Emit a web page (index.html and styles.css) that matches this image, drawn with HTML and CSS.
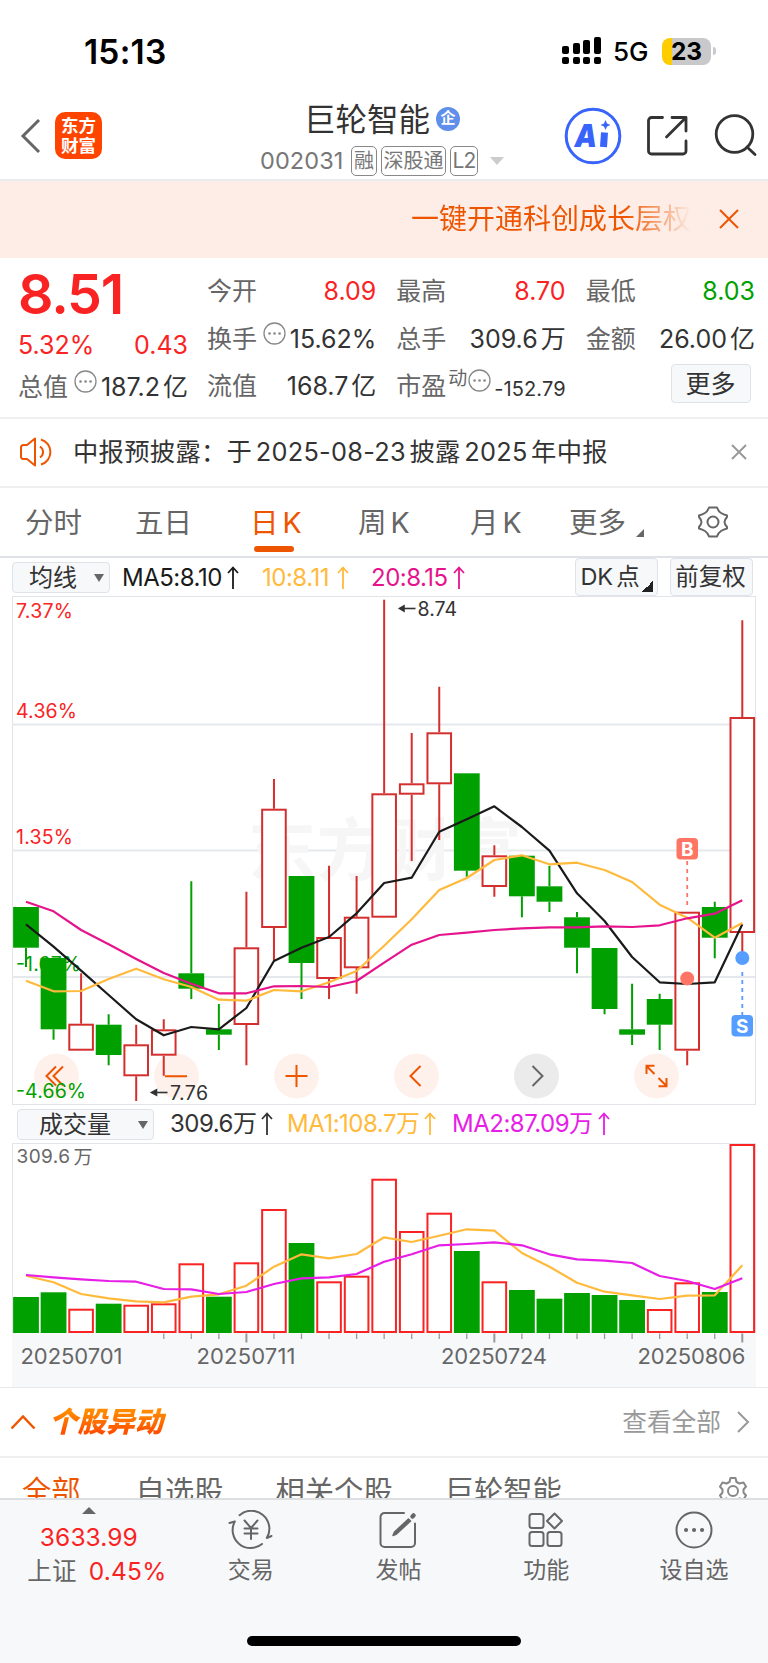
FILE: index.html
```
<!DOCTYPE html>
<html lang="zh-CN">
<head>
    <meta charset="utf-8">
    <title>巨轮智能 002031</title>
    <link rel="stylesheet" href="styles.css">
</head>
<body>
    <div class="status-bar">
        <span class="status-time">15:13</span>
        <svg class="status-signal" width="40" height="28" viewBox="0 0 40 28">
            <rect x="0" y="9" width="7" height="8" rx="2"/>
            <rect x="11" y="6" width="7" height="11" rx="2"/>
            <rect x="21" y="3" width="7" height="14" rx="2"/>
            <rect x="32" y="0" width="7" height="17" rx="2"/>
            <rect x="0" y="20" width="7" height="7" rx="2"/>
            <rect x="11" y="20" width="7" height="7" rx="2"/>
            <rect x="21" y="20" width="7" height="7" rx="2"/>
            <rect x="32" y="20" width="7" height="7" rx="2"/>
        </svg>
        <span class="status-net">5G</span>
        <span class="battery">23</span>
        <span class="battery-tip"></span>
    </div>

    <div class="header">
        <svg class="header-back" width="22" height="36" viewBox="0 0 22 36"><path d="M19 2 L3 18 L19 34"/></svg>
        <div class="logo"><span>东方</span><span>财富</span></div>
        <div class="header-title">
            <div class="stock-name">巨轮智能<span class="name-badge">企</span></div>
            <div class="stock-code">
                <span class="code-num">002031</span>
                <span class="tag">融</span><span class="tag tag--wide">深股通</span><span class="tag tag--l2">L2</span>
                <span class="code-arrow"></span>
            </div>
        </div>
        <svg class="header-icons" width="196" height="60" viewBox="0 0 196 60">
            <circle cx="30" cy="30" r="26.8" fill="none" stroke="#3864fb" stroke-width="3"/>
            <text x="11.500" y="40.500" class="ai-text" textLength="22.500" lengthAdjust="spacingAndGlyphs">A</text>
            <path d="M41.500 26.500L40.500 41" stroke="#3864fb" stroke-width="7"/>
            <path d="M42.500 14L44 17.500L47.500 19L44 20.500L42.500 24L41 20.500L37.500 19L41 17.500Z" fill="#3864fb"/>
            <g fill="none" stroke="#333" stroke-width="2.800" stroke-linecap="round" stroke-linejoin="round">
                <path d="M99.500 11.500H88.500a3 3 0 0 0-3 3V45a3 3 0 0 0 3 3H120a3 3 0 0 0 3-3V35"/>
                <path d="M109 11.500H123V25M122.500 12L103.500 31"/>
                <circle cx="171.500" cy="28" r="18.300"/>
                <path d="M184 41L192 48.500"/>
            </g>
        </svg>
    </div>

    <div class="banner">
        <span class="banner-text">一键开通科创成长层权</span>
        <svg width="20" height="20" viewBox="0 0 20 20"><path d="M1 1L19 19M19 1L1 19"/></svg>
    </div>

    <div class="quote">
        <div class="quote-main">
            <div class="price">8.51</div>
            <div class="change"><span>5.32%</span><span>0.43</span></div>
            <div class="cell cell--total"><label>总值</label><svg class="dots"><use href="#dots"/></svg><b>187.2<i>亿</i></b></div>
        </div>
        <div class="quote-grid">
            <div class="cell"><label>今开</label><b class="up">8.09</b></div>
            <div class="cell"><label>最高</label><b class="up">8.70</b></div>
            <div class="cell"><label>最低</label><b class="down">8.03</b></div>
            <div class="cell"><label>换手</label><svg class="dots"><use href="#dots"/></svg><b>15.62%</b></div>
            <div class="cell"><label>总手</label><b>309.6<i>万</i></b></div>
            <div class="cell"><label>金额</label><b>26.00<i>亿</i></b></div>
            <div class="cell"><label>流值</label><b>168.7<i>亿</i></b></div>
            <div class="cell"><label>市盈</label><sup>动</sup><svg class="dots dots--pe"><use href="#dots"/></svg><b class="small">-152.79</b></div>
            <div class="cell cell--more"><button class="btn-more">更多</button></div>
        </div>
    </div>

    <div class="notice">
        <svg width="34" height="30" viewBox="0 0 34 30">
            <path d="M16 1.500L8 8H4.500A2.500 2.500 0 0 0 2 10.500V19.500A2.500 2.500 0 0 0 4.500 22H8L16 28.500ZM21 9.500A6.500 6.500 0 0 1 21 20.500M22 2.500A13 13 0 0 1 22 27.500"/>
        </svg>
        <span class="notice-text">中报预披露：于<em>2025-08-23</em>披露<em>2025</em>年中报</span>
        <svg class="notice-close" width="16" height="16" viewBox="0 0 16 16"><path d="M1 1L15 15M15 1L1 15"/></svg>
    </div>

    <div class="tabs">
        <span class="tab">分时</span>
        <span class="tab">五日</span>
        <span class="tab tab--active">日<em>K</em></span>
        <span class="tab">周<em>K</em></span>
        <span class="tab tab--month">月<em>K</em></span>
        <span class="tab tab--more">更多</span>
        <svg class="tabs-gear" width="34" height="34" viewBox="0 0 34 34">
            <path d="M13 2.500H21Q22.500 6.500 25 8T31 10.500V12Q28.500 15 28.500 17T31 22V23.500Q27.500 24.500 25 26T21 31.500H13Q11.500 27.500 9 26T3 23.500V22Q5.500 19 5.500 17T3 12V10.500Q6.500 9.500 9 8T13 2.500Z"/>
            <circle cx="17" cy="17" r="5.500"/>
        </svg>
    </div>

    <div class="indicators">
        <span class="select select--ma">均线</span>
        <span class="ind ind--ma5">MA5:8.10<svg class="rise"><use href="#rise"/></svg></span>
        <span class="ind ind--ma10">10:8.11<svg class="rise rise--wide"><use href="#rise"/></svg></span>
        <span class="ind ind--ma20">20:8.15<svg class="rise"><use href="#rise"/></svg></span>
        <span class="box-btn box-btn--dk"><em>DK</em>点</span>
        <span class="box-btn">前复权</span>
    </div>

    <svg class="chart" id="kline" width="768" height="509" viewBox="0 0 768 509">
        <rect x="12.500" y="0.500" width="743" height="508" fill="none" stroke="#e1e4e9"/>
        <path d="M12 128.500H755M12 254.500H755M12 381H755" stroke="#e5e9ee" stroke-width="1.800"/>
        <text x="248" y="279" class="watermark" textLength="274">东方财富</text>
        <g class="axis-label">
            <text x="16" y="22" textLength="57">7.37%</text>
            <text x="16" y="122" textLength="61">4.36%</text>
            <text x="16" y="248" textLength="57">1.35%</text>
            <text x="16" y="374.500" textLength="65" class="axis-label--down">-1.67%</text>
        </g>
        <g id="candles"></g>
        <g id="averages"></g>
        <g class="marker marker--buy">
            <rect x="676.500" y="242" width="21.500" height="21.500" rx="4"/>
            <text x="687.200" y="259.500">B</text>
            <path d="M687.200 265V309"/>
            <circle cx="687.200" cy="382.500" r="7"/>
        </g>
        <g class="marker marker--sell">
            <circle cx="742.300" cy="362" r="7"/>
            <path d="M742.300 376V419"/>
            <rect x="731.500" y="419" width="21.500" height="21.500" rx="4"/>
            <text x="742.200" y="436.800">S</text>
        </g>
        <g class="tool">
            <circle cx="56.500" cy="480" r="22.500"/>
            <circle cx="176.500" cy="480" r="22.500"/>
            <circle cx="296.500" cy="480" r="22.500"/>
            <circle cx="416.500" cy="480" r="22.500"/>
            <circle cx="536.500" cy="480" r="22.500" class="tool--off"/>
            <circle cx="656.500" cy="480" r="22.500"/>
            <path d="M56 470.500L46.500 480L56 489.500M63 470.500L53.500 480L63 489.500M165 480.300H187M285.500 480H307.500M296.500 469V491M420.500 470L410.500 480L420.500 490"/>
            <path d="M532.500 470L542.500 480L532.500 490" class="tool--off-arrow"/>
            <path d="M654.500 469.800H646.500V478M646.500 470L654.500 478M658.500 490.300H666.500V482M666.500 490L658.500 482"/>
        </g>
        <g class="axis-label">
            <text x="16" y="501.500" textLength="70" class="axis-label--down">-4.66%</text>
        </g>
        <g class="peak">
            <text x="417.500" y="20" textLength="39.500">8.74</text>
            <path d="M402 12.500H415.500"/>
            <path d="M399.500 12.500L404 9.800V15.200Z"/>
            <text x="170" y="503.500" textLength="38">7.76</text>
            <path d="M154 496.500H167.500"/>
            <path d="M151.500 496.500L156.500 493.800V499.200Z"/>
        </g>
    </svg>

    <div class="indicators indicators--vol">
        <span class="select select--vol">成交量</span>
        <span class="ind ind--vol">309.6万<svg class="rise"><use href="#rise"/></svg></span>
        <span class="ind ind--ma1">MA1:108.7万<svg class="rise"><use href="#rise"/></svg></span>
        <span class="ind ind--ma2">MA2:87.09万<svg class="rise"><use href="#rise"/></svg></span>
    </div>

    <svg class="chart" id="volume" width="768" height="244" viewBox="0 0 768 244">
        <rect x="12" y="190" width="744" height="54" fill="#f7f8fa"/>
        <path d="M12.500 190V0.500H755.500V190" fill="none" stroke="#e1e4e9"/>
        <text x="16.500" y="20" class="vol-max" textLength="53.500">309.6</text>
        <text x="73.500" y="20.500" class="vol-max">万</text>
        <g id="bars"></g>
        <g id="volAverages"></g>
        <g id="ticks"></g>
        <g class="date">
            <text x="20.500" y="221" textLength="102">20250701</text>
            <text x="196.500" y="221" textLength="99">20250711</text>
            <text x="441" y="221" textLength="106">20250724</text>
            <text x="637.500" y="221" textLength="108">20250806</text>
        </g>
    </svg>

    <div class="section-head">
        <svg width="26" height="16" viewBox="0 0 26 16"><path d="M1.500 14.500L13 2.500L24.500 14.500"/></svg>
        <span class="section-title">个股异动</span>
        <span class="section-all">查看全部</span>
        <svg class="section-go" width="14" height="24" viewBox="0 0 14 24"><path d="M2 2L12 12L2 22"/></svg>
    </div>

    <div class="sub-tabs">
        <span class="sub-tab sub-tab--active">全部</span>
        <span class="sub-tab">自选股</span>
        <span class="sub-tab">相关个股</span>
        <span class="sub-tab">巨轮智能</span>
        <svg width="30" height="30" viewBox="0 0 30 30">
            <path d="M11.500 6L12.500 2H17.500L18.500 6L21.500 7.500L25.500 6.500L28 10.500L25.500 13.500V16.500L28 19.500L25.500 23.500L21.500 22.500L18.500 24L17.500 28H12.500L11.500 24L8.500 22.500L4.500 23.500L2 19.500L4.500 16.500V13.500L2 10.500L4.500 6.500L8.500 7.500Z"/>
            <circle cx="15" cy="15" r="5"/>
        </svg>
    </div>

    <div class="bottom-nav">
        <div class="nav-index">
            <span class="nav-caret"></span>
            <span class="nav-points">3633.99</span>
            <span class="nav-market">上证<em>0.45%</em></span>
        </div>
        <div class="nav-item">
            <svg width="46" height="40" viewBox="0 0 46 40">
                <path d="M11.500 5.200A18 18 0 0 1 38.800 28L43.500 26M34 34A18 18 0 0 1 6.800 11.500L1.500 13"/>
                <path d="M16.500 10.500L23 18L29.500 10.500M23 18V29M16.500 18.500H29.500M16.500 23.500H29.500"/>
            </svg>
            <span>交易</span>
        </div>
        <div class="nav-item">
            <svg width="44" height="40" viewBox="0 0 44 40">
                <path d="M28 3H8.500A4 4 0 0 0 4.500 7V33A4 4 0 0 0 8.500 37H35A4 4 0 0 0 39 33V13.500"/>
                <path d="M36.500 6.500L37.500 5.500" stroke-width="4.500"/>
                <path d="M32.500 9L34.500 11L20.500 24L17 25.500L18.500 22Z" fill="#666" stroke-width="1.500"/>
            </svg>
            <span>发帖</span>
        </div>
        <div class="nav-item">
            <svg width="44" height="40" viewBox="0 0 44 40">
                <rect x="5.500" y="4" width="14" height="14" rx="2.500"/>
                <rect x="5.500" y="22" width="14" height="14" rx="2.500"/>
                <rect x="23.500" y="22" width="14" height="14" rx="2.500"/>
                <path d="M30.500 3.500L38 11L30.500 18.500L23 11Z"/>
            </svg>
            <span>功能</span>
        </div>
        <div class="nav-item">
            <svg width="44" height="40" viewBox="0 0 44 40">
                <circle cx="22" cy="20" r="17.500"/>
                <path d="M14 20h.1M22 20h.1M30 20h.1" stroke-width="4"/>
            </svg>
            <span>设自选</span>
        </div>
        <div class="home-bar"></div>
    </div>

    <svg class="defs" width="0" height="0">
        <symbol id="dots" viewBox="0 0 23 23">
            <circle cx="11.500" cy="11.500" r="10.500" fill="none" stroke="#888" stroke-width="1.300"/>
            <path d="M6.500 11.500h.1M11.500 11.500h.1M16.500 11.500h.1" stroke="#888" stroke-width="2.600" stroke-linecap="round"/>
        </symbol>
        <symbol id="rise" viewBox="0 0 12 24">
            <path d="M6 23V2M1 7L6 1.500L11 7" fill="none" stroke="currentColor" stroke-width="1.800"/>
        </symbol>
    </svg>

    <script>
        const STEP = 27.55;
        const FIRST = 26;

        // up, high, top, bottom, low
        const candles = [
            [0, 311, 311, 351.7, 371], [0, 362, 362, 433.3, 443.7], [1, 377.3, 427.7, 454.7, 454.7],
            [0, 418.3, 428.7, 459, 469.3], [1, 428.7, 448.3, 480.3, 505], [1, 423.3, 433.3, 459.7, 479.7],
            [0, 285.3, 377.3, 392.7, 403], [0, 408, 433.3, 438.7, 454], [1, 295.7, 351.3, 429, 469.3],
            [1, 183, 212.7, 332, 365.7], [0, 280, 280, 367, 403], [1, 269.7, 341, 383, 403],
            [1, 280, 320.7, 372.3, 397.7], [1, 3.7, 197.3, 321.7, 321.7], [1, 137, 187.3, 198.7, 265],
            [1, 90.7, 136.3, 188.3, 244], [0, 177.3, 177.3, 274.7, 280.7], [1, 249.3, 259.3, 291, 300.7],
            [0, 259.7, 259.7, 300.3, 321.3], [0, 269.7, 290.3, 305.7, 316], [0, 316, 321.3, 351.7, 377.3],
            [0, 352, 352, 413, 418.3], [0, 387.7, 433.3, 438.7, 449], [0, 397.7, 403, 428.7, 454],
            [1, 315.7, 315.7, 454.7, 469.3], [0, 305.7, 311, 341.7, 362.3], [1, 24.3, 121, 337, 367.3]
        ];
        const bars = [154, 149.3, 165.7, 160.7, 161.7, 160.3, 120.3, 153.7, 119.3, 66, 100, 138.3, 132.7, 35.7,
            88, 69.7, 108, 138.3, 147, 155.7, 150, 152, 157, 166, 139.3, 149, 1];
        const barUp = [0, 0, 1, 0, 1, 1, 1, 0, 1, 1, 0, 1, 1, 1, 1, 1, 0, 1, 0, 0, 0, 0, 0, 1, 1, 0, 1];

        const ma5 = [328.3, 350.7, 374.7, 399, 423.3, 439.3, 431, 433.3, 412, 365, 351.7, 341, 317.3, 287, 281.7,
            235.7, 223.3, 210.3, 231, 254.7, 297.3, 325, 361, 386.3, 388, 386.3, 328.3];
        const ma10 = [384.7, 395.3, 395, 383, 372.7, 383.3, 391, 403.7, 404.7, 394, 395.3, 386.3, 375, 349.7, 323.3,
            294, 282, 264, 259.3, 268.3, 266.7, 274, 286, 308.7, 321.7, 341.7, 327];
        const ma20 = [305.7, 315.3, 334, 348.3, 363, 377, 387.7, 397.3, 397.3, 390.3, 390, 391, 385, 366.7, 348.7,
            339, 336.7, 334, 332.3, 331.3, 331.3, 330.3, 331, 329.3, 322.3, 317.7, 304.3];
        const volMa1 = [132.7, 139.3, 151, 155.3, 158.3, 159.3, 153.7, 151.3, 142.7, 123.7, 111.3, 115.3, 111, 94.3,
            99, 92.7, 86.3, 87.7, 110, 123.7, 139.7, 148.7, 152.3, 156, 152.7, 152.3, 122.3];
        const volMa2 = [132, 134.3, 136.3, 138, 138.7, 146, 146.3, 151, 149, 141, 135.3, 134.3, 131, 118.7,
            111.3, 102.3, 101, 99.3, 102.3, 111.3, 116.3, 117.7, 120, 133, 138, 146, 135.3];

        function addShape(parentId, tag, attrs) {
            const el = document.createElementNS("http://www.w3.org/2000/svg", tag);
            for (const key in attrs) {
                el.setAttribute(key, attrs[key]);
            }
            document.getElementById(parentId).appendChild(el);
        }

        function addBody(parentId, x, top, bottom, up, className) {
            const inset = up ? 1 : 0;
            const half = up ? 11.8 : 12.9;
            addShape(parentId, "rect", {
                x: x - half, y: top + inset, width: half * 2, height: bottom - top - inset * 2, class: className
            });
        }

        function addLine(parentId, values, color) {
            const points = values.map((v, i) => (FIRST + i * STEP) + "," + v).join(" ");
            addShape(parentId, "polyline", { points: points, stroke: color });
        }

        candles.forEach(function(c, i) {
            const x = FIRST + i * STEP;
            const name = c[0] ? "candle candle--up" : "candle candle--down";
            addShape("candles", "path", { d: `M${x} ${c[1]}V${c[2]}M${x} ${c[3]}V${c[4]}`, class: name });
            addBody("candles", x, c[2], c[3], c[0], name);
        });

        bars.forEach(function(top, i) {
            addBody("bars", FIRST + i * STEP, top, 190, barUp[i], barUp[i] ? "bar--up" : "candle--down");
        });

        for (let i = 5; i < 27; i++) {
            const major = i % 9 === 8;
            addShape("ticks", "path", { d: `M${FIRST + i * STEP} 190.500v${major ? 9 : 5.5}`, "stroke-width": major ? 2 : 1.3 });
        }

        addLine("averages", ma5, "#1a1a1a");
        addLine("averages", ma10, "#ffba3c");
        addLine("averages", ma20, "#e6148c");
        addLine("volAverages", volMa1, "#ffba3c");
        addLine("volAverages", volMa2, "#e61ee6");
    </script>
</body>
</html>
```
FILE: styles.css
```
:root {
    --red: #fa2323;
    --green: #00a000;
    --orange: #ee5500;
    --line: #e6e8eb;
    --panel: #f7f8fa;
}

* {
    box-sizing: border-box;
}

body {
    background: #fff;
    color: #333;
    font-family: Inter, "Noto Sans CJK SC", sans-serif;
    height: 1663px;
    margin: 0;
    overflow: hidden;
    width: 768px;
}

svg {
    display: block;
    flex-shrink: 0;
}

em,
i,
b {
    font-style: normal;
    font-weight: 400;
}

.defs {
    position: absolute;
}

/* status bar */
.status-bar {
    align-items: center;
    color: #000;
    display: flex;
    height: 102px;
    padding-left: 84px;
}

.status-time {
    font-size: 33.5px;
    font-weight: 600;
    letter-spacing: 0.2px;
    line-height: 40px;
    margin-top: 2px;
    width: 478px;
}

.status-net {
    font-size: 26px;
    font-weight: 500;
    line-height: 32px;
    margin-left: 11px;
    margin-top: 2px;
    width: 49px;
}

.battery {
    background: linear-gradient(90deg, #ffcc00 10px, #c9c9cb 10px);
    border-radius: 8px;
    font-size: 24.5px;
    font-weight: 700;
    height: 27px;
    line-height: 27px;
    text-align: center;
    width: 49px;
}

.battery-tip {
    background: #c9c9cb;
    border-radius: 0 3px 3px 0;
    height: 8px;
    margin-left: 2px;
    width: 3px;
}

/* header */
.header {
    border-bottom: 2px solid #e9ecee;
    display: flex;
    height: 79px;
}

.header-back {
    fill: none;
    margin: 16px 13px 0 20px;
    stroke: #666;
    stroke-width: 3;
}

.logo {
    align-items: center;
    background: #ff4400;
    border-radius: 10px;
    color: #fff;
    display: flex;
    flex-direction: column;
    font-size: 17.5px;
    font-weight: 700;
    height: 47px;
    justify-content: center;
    line-height: 20px;
    margin-top: 10px;
    width: 47px;
}

.header-title {
    margin-left: 158px;
    width: 303px;
}

.stock-name {
    display: flex;
    font-size: 31.5px;
    height: 37px;
    line-height: 35px;
    padding-left: 44px;
}

.name-badge {
    background: #5f8fea;
    border-radius: 50%;
    color: #fff;
    font-size: 15px;
    font-weight: 700;
    height: 24px;
    line-height: 22px;
    margin: 5px 0 0 6px;
    text-align: center;
    width: 24px;
}

.stock-code {
    align-items: center;
    color: #777;
    display: flex;
    height: 44px;
}

.code-num {
    font-size: 23.5px;
    letter-spacing: 0.1px;
    line-height: 28px;
    width: 91px;
}

.tag {
    border: 1.5px solid #888;
    border-radius: 5px;
    font-size: 20px;
    height: 30px;
    line-height: 28px;
    text-align: center;
    width: 26px;
}

.tag--wide {
    margin: 0 4px;
    width: 65px;
}

.tag--l2 {
    font-size: 21px;
    letter-spacing: -0.8px;
    width: 28px;
}

.code-arrow {
    border: 7px solid transparent;
    border-bottom: none;
    border-top: 8px solid #ccc;
    margin-left: 12px;
}

.header-icons {
    margin-top: 4px;
}

.ai-text {
    fill: #3864fb;
    font-size: 32px;
    font-style: italic;
    font-weight: 900;
}

/* banner */
.banner {
    align-items: center;
    background: #fdede6;
    display: flex;
    height: 77px;
    justify-content: flex-end;
    padding-right: 29px;
}

.banner-text {
    background: linear-gradient(90deg, var(--orange) 215px, rgba(238, 85, 0, 0) 280px);
    -webkit-background-clip: text;
    background-clip: text;
    color: transparent;
    font-size: 28px;
    line-height: 40px;
    margin-right: 28px;
    margin-top: -1px;
}

.banner svg {
    fill: none;
    margin-top: -2px;
    stroke: var(--orange);
    stroke-width: 2;
}

/* quote */
.quote {
    border-bottom: 2px solid #eeeff1;
    display: flex;
    height: 161px;
    padding: 9px 13px 0 18px;
}

.quote-main {
    width: 170px;
}

.price {
    color: var(--red);
    font-size: 55.5px;
    font-weight: 600;
    height: 64px;
    letter-spacing: -1.2px;
    line-height: 54px;
}

.change {
    color: var(--red);
    display: flex;
    font-size: 25px;
    height: 32px;
    justify-content: space-between;
    line-height: 29px;
}

.quote-grid {
    column-gap: 20px;
    display: grid;
    flex: 1;
    grid-auto-rows: 47.5px;
    grid-template-columns: repeat(3, 1fr);
    margin-left: 19px;
}

.cell {
    color: #333;
    display: flex;
    font-size: 25px;
    height: 47.5px;
    line-height: 48px;
}

.cell label {
    color: #666;
}

.cell b {
    margin-left: auto;
    white-space: nowrap;
}

.cell i {
    margin-left: 3px;
}

.cell sup {
    color: #666;
    font-size: 19px;
    line-height: 33px;
    margin-left: 2px;
    vertical-align: baseline;
}

.cell .small {
    font-size: 20px;
    letter-spacing: 0.1px;
    padding-top: 3px;
}

.cell .up {
    color: var(--red);
}

.cell .down {
    color: var(--green);
}

.dots {
    height: 23px;
    margin: 7px 0 0 6px;
    width: 23px;
}

.dots--pe {
    margin-left: 1px;
}

.cell--more {
    justify-content: flex-end;
}

.btn-more {
    background: var(--panel);
    border: 1.5px solid #dfe2e8;
    border-radius: 4px;
    color: #333;
    font: inherit;
    height: 39px;
    line-height: 34px;
    margin: 2px 4px 0 0;
    padding: 0 1px 0 0;
    width: 80px;
}

/* notice */
.notice {
    align-items: center;
    border-bottom: 2px solid #eeeff1;
    display: flex;
    height: 69px;
    padding: 0 21px 1px 19px;
}

.notice svg {
    fill: none;
    stroke: var(--orange);
    stroke-linejoin: round;
    stroke-width: 2;
}

.notice-text {
    flex: 1;
    font-size: 25.3px;
    letter-spacing: 0.3px;
    line-height: 36px;
    margin-left: 20px;
}

.notice-text em {
    margin: 0 3.5px;
}

.notice .notice-close {
    stroke: #999;
}

/* period tabs */
.tabs {
    border-bottom: 2px solid #dfe2e6;
    color: #666;
    display: flex;
    font-size: 28.5px;
    height: 70px;
    line-height: 69px;
    padding-left: 25px;
}

.tab {
    width: 110px;
}

.tab em {
    margin-left: 4px;
}

.tab--active {
    color: var(--orange);
    margin-left: 5px;
    position: relative;
    width: 108px;
}

.tab--active::after {
    background: var(--orange);
    border-radius: 3px;
    bottom: 4px;
    content: "";
    height: 6px;
    left: 4px;
    position: absolute;
    width: 40px;
}

.tab--month {
    margin-left: 2px;
}

.tab--more {
    display: flex;
    margin-left: -11px;
    width: 127px;
}

.tab--more::after {
    border-bottom: 8px solid #666;
    border-left: 8px solid transparent;
    content: "";
    height: 0;
    margin: 41px 0 0 10px;
}

.tabs-gear {
    fill: none;
    margin-top: 17px;
    stroke: #666;
    stroke-linejoin: round;
    stroke-width: 2;
}

/* indicator rows */
.indicators {
    align-items: center;
    display: flex;
    height: 38px;
    padding-left: 12px;
}

.indicators--vol {
    padding-left: 17px;
}

.select {
    align-items: center;
    background: var(--panel);
    border: 1.5px solid #dfe2e8;
    border-radius: 4px;
    display: flex;
    font-size: 24px;
    height: 31px;
    justify-content: space-between;
    line-height: 28px;
    padding: 1px 5px 0 16px;
}

.select::after {
    border: 5px solid transparent;
    border-bottom: none;
    border-top: 8px solid #666;
    content: "";
}

.select--ma {
    width: 98px;
}

.select--vol {
    padding-left: 21px;
    width: 137px;
}

.ind {
    display: flex;
    font-size: 24px;
    letter-spacing: -0.5px;
    white-space: nowrap;
}

.rise {
    height: 24px;
    margin: 3px 0 0 5px;
    width: 12px;
}

.rise--wide {
    margin-left: 8px;
}

.ind--ma5 {
    color: #1a1a1a;
    margin-left: 12px;
    width: 140px;
}

.ind--ma10 {
    color: #ffba3c;
    width: 109px;
}

.ind--ma20 {
    color: #e6148c;
    width: 204px;
}

.ind--vol {
    margin-left: 16px;
    width: 117px;
}

.ind--ma1 {
    color: #ffba3c;
    width: 165px;
}

.ind--ma2 {
    color: #e61ee6;
}

.indicators--vol .ind {
    line-height: 32px;
}

.indicators--vol .rise {
    margin-top: 4px;
}

.box-btn {
    background: var(--panel);
    border: 1.5px solid #dfe2e8;
    border-radius: 4px;
    font-size: 23.5px;
    height: 38px;
    line-height: 36px;
    margin-left: 12px;
    padding-right: 2px;
    text-align: center;
    white-space: nowrap;
    width: 83px;
}

.box-btn em {
    margin-right: 3px;
}

.box-btn--dk {
    background: linear-gradient(135deg, transparent 50%, #222 50%) right 4px bottom 3px / 11px 11px no-repeat, var(--panel);
    margin-left: 0;
    padding-right: 13px;
}

/* charts */
.candle {
    stroke-width: 2;
}

.candle--up {
    fill: #fff;
    stroke: #d42f2f;
}

.bar--up {
    fill: #fff;
    stroke: var(--red);
    stroke-width: 2;
}

.candle--down {
    fill: var(--green);
    stroke: var(--green);
}

rect.candle--down {
    stroke: none;
}

polyline {
    fill: none;
    stroke-linejoin: round;
    stroke-width: 2.2;
}

#ticks {
    stroke: #999;
}

.watermark {
    fill: #f6f6f6;
    font-size: 68px;
    font-weight: 700;
}

.axis-label {
    fill: var(--red);
    font-size: 19.5px;
}

.axis-label--down {
    fill: var(--green);
}

.vol-max {
    fill: #666;
    font-size: 19px;
}

.date {
    fill: #666;
    font-size: 22px;
}

.peak {
    fill: #333;
    font-size: 19.5px;
    stroke-width: 1.6;
}

.peak path {
    stroke: #333;
}

.peak text {
    stroke: none;
}

.marker text {
    fill: #fff;
    font-size: 19px;
    font-weight: 700;
    text-anchor: middle;
}

.marker path {
    stroke-dasharray: 4 4;
    stroke-width: 1.8;
}

.marker--buy {
    fill: #ff7565;
}

.marker--buy path {
    stroke: #ff7565;
}

.marker--sell {
    fill: #559dff;
}

.marker--sell path {
    stroke: #559dff;
}

.tool circle {
    fill: rgba(240, 90, 20, 0.09);
}

.tool .tool--off {
    fill: #ebebeb;
}

.tool path {
    fill: none;
    stroke: var(--orange);
    stroke-width: 2;
}

.tool .tool--off-arrow {
    stroke: #666;
}

/* stock moves */
.section-head {
    align-items: center;
    border-bottom: 2px solid #eeeff1;
    border-top: 1px solid var(--line);
    display: flex;
    height: 71px;
    padding: 0 18px 0 10px;
}

.section-head svg {
    fill: none;
    stroke: var(--orange);
    stroke-width: 2.5;
}

.section-title {
    background: linear-gradient(#ff8a00 25%, #ff5000 75%);
    -webkit-background-clip: text;
    background-clip: text;
    color: transparent;
    font-size: 28.5px;
    font-style: italic;
    font-weight: 900;
    line-height: 40px;
    margin-left: 13px;
    padding-right: 6px;
}

.section-all {
    color: #999;
    font-size: 24.7px;
    line-height: 36px;
    margin-left: auto;
}

.section-head .section-go {
    margin-left: 15px;
    stroke: #999;
    stroke-width: 2;
}

/* last row runs on under the bottom bar */
.sub-tabs {
    color: #666;
    display: flex;
    font-size: 29.3px;
    height: 40px;
    line-height: 40px;
    overflow: hidden;
    padding: 14px 20px 0 22px;
}

.sub-tab {
    margin-right: 52px;
    white-space: nowrap;
}

.sub-tab--active {
    color: var(--orange);
    margin-right: 55px;
}

.sub-tabs svg {
    fill: none;
    margin: 4px 0 0 auto;
    stroke: #888;
    stroke-linejoin: round;
    stroke-width: 2;
}

/* bottom bar */
.bottom-nav {
    background: var(--panel);
    border-top: 2px solid #dcdee2;
    display: flex;
    height: 165px;
    position: relative;
}

.nav-index {
    align-items: center;
    color: var(--red);
    display: flex;
    flex-direction: column;
    font-size: 24.5px;
    padding-left: 1px;
    width: 177px;
}

.nav-caret {
    border: 7px solid transparent;
    border-bottom: 7px solid #666;
    border-top: none;
    margin-top: 7px;
}

.nav-points {
    letter-spacing: 0.1px;
    line-height: 30px;
    margin-top: 8px;
}

.nav-market {
    color: #666;
    letter-spacing: 0.2px;
    line-height: 38px;
    margin-left: 16px;
    white-space: nowrap;
}

.nav-market em {
    color: var(--red);
    margin-left: 12px;
}

.nav-item {
    align-items: center;
    color: #666;
    display: flex;
    flex-direction: column;
    font-size: 23px;
    padding-top: 10px;
    width: 148px;
}

.nav-item svg {
    fill: none;
    stroke: #666;
    stroke-linecap: round;
    stroke-linejoin: round;
    stroke-width: 2;
}

.nav-item span {
    line-height: 34px;
    margin-top: 3px;
}

.home-bar {
    background: #000;
    border-radius: 5px;
    bottom: 17px;
    height: 10px;
    left: 247px;
    position: absolute;
    width: 274px;
}
```
